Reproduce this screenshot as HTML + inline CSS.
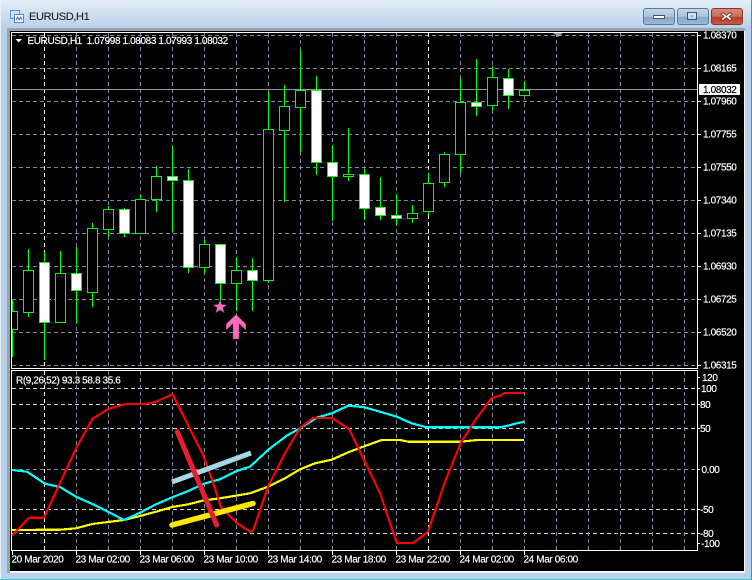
<!DOCTYPE html>
<html><head><meta charset="utf-8"><title>EURUSD,H1</title>
<style>
html,body{margin:0;padding:0;width:752px;height:580px;overflow:hidden;background:#b9d1ea}
svg{display:block;position:absolute;left:0;top:0}
text{font-family:"Liberation Sans",sans-serif;font-size:10px;letter-spacing:-.38px;fill:#fff;stroke:#fff;stroke-width:.18px;white-space:pre}
.c path,.c rect{stroke:#00ff00;stroke-width:1;fill:#000}
.c rect.w{fill:#fff}
.g{stroke:#7b8ca2;stroke-width:1;stroke-dasharray:4 3;fill:none}
.h{stroke:#fff;stroke-width:1;stroke-dasharray:4 3;fill:none}
.l{stroke:#d8d8d8;stroke-width:1;stroke-dasharray:4 3;fill:none}
.s{stroke:#fff;stroke-width:1;fill:none}
.i{fill:none;stroke-width:2.2;stroke-linejoin:round;shape-rendering:crispEdges}
</style></head><body>
<svg width="752" height="580" viewBox="0 0 752 580" xmlns="http://www.w3.org/2000/svg">
<defs>
<linearGradient id="tb" x1="0" y1="0" x2="0" y2="1"><stop offset="0" stop-color="#e4edf6"/><stop offset=".5" stop-color="#cfe0f0"/><stop offset="1" stop-color="#b9d1ea"/></linearGradient>
<linearGradient id="bn" x1="0" y1="0" x2="0" y2="1"><stop offset="0" stop-color="#c6d9ec"/><stop offset=".5" stop-color="#a9c4de"/><stop offset=".55" stop-color="#86a8ca"/><stop offset="1" stop-color="#9dbbd8"/></linearGradient>
<linearGradient id="bc" x1="0" y1="0" x2="0" y2="1"><stop offset="0" stop-color="#dc8a7c"/><stop offset=".5" stop-color="#cf6a58"/><stop offset=".55" stop-color="#b83a28"/><stop offset="1" stop-color="#c85a46"/></linearGradient>
<clipPath id="mc"><rect x="12" y="33" width="685" height="335"/></clipPath>
</defs>

<!-- window frame -->
<rect width="752" height="580" fill="#b9d1ea"/>
<rect width="752" height="28" fill="url(#tb)"/>
<rect x="0" y="0" width="1" height="580" fill="#e8f0f8"/>
<rect x="0" y="579" width="752" height="1" fill="#2fd0e0"/>
<rect x="751" y="0" width="1" height="580" fill="#6f8296"/>
<rect x="7" y="28" width="738" height="545" fill="#9aa4ae"/>
<rect x="10" y="31" width="735" height="542" fill="#f4f6f8"/>
<rect x="10" y="31" width="734" height="540" fill="#000"/>

<!-- title icon -->
<rect x="10.5" y="10.5" width="9" height="8" fill="#cfe3f8" stroke="#5b8fd0"/>
<rect x="14.5" y="14.5" width="9" height="8" fill="#fff" stroke="#4a86c8"/>
<path d="M16 20l1.500-3 1.500 3 1.500-3 1.500 3" fill="none" stroke="#3a70b8" stroke-width="1"/>
<text x="29" y="20" style="font-size:11px;letter-spacing:-.35px;fill:#1c1c1c;stroke:#1c1c1c;stroke-width:.1px">EURUSD,H1</text>

<!-- window buttons -->
<rect x="643.500" y="8.500" width="31" height="16" rx="2.500" fill="url(#bn)" stroke="#5d7a98"/>
<rect x="677.500" y="8.500" width="31" height="16" rx="2.500" fill="url(#bn)" stroke="#5d7a98"/>
<rect x="711.500" y="8.500" width="31" height="16" rx="2.500" fill="url(#bc)" stroke="#7a3a30"/>
<rect x="653.500" y="15.500" width="11" height="3" fill="#fff" stroke="#44586c"/>
<rect x="687.500" y="12.500" width="9" height="7" fill="none" stroke="#44586c" stroke-width="1"/>
<rect x="689" y="14" width="6" height="4" fill="none" stroke="#fff" stroke-width="1"/>
<path d="M723 12.500l3.500 3 3.500-3 2 1.500-3 2.500 3 2.500-2 1.500-3.500-3-3.500 3-2-1.500 3-2.500-3-2.500z" fill="#fff" stroke="#5a3a34" stroke-width=".8"/>

<!-- main grid -->
<g>
<path class="g" d="M12 35.500H697M12 68.500H697M12 101.500H697M12 134.500H697M12 167.500H697M12 200.500H697M12 233.500H697M12 266.500H697M12 299.500H697M12 332.500H697M12 365.500H697"/>
<path class="g" d="M76.500 33V368M108.500 33V368M140.500 33V368M172.500 33V368M204.500 33V368M236.500 33V368M268.500 33V368M300.500 33V368M332.500 33V368M364.500 33V368M396.500 33V368M460.500 33V368M492.500 33V368M524.500 33V368M556.500 33V368M588.500 33V368M620.500 33V368M652.500 33V368M684.500 33V368"/>
<path class="h" d="M44.500 33V368M428.500 33V368"/>
<path d="M12 89.500H697" stroke="#8a96a4" stroke-width="1"/>

<!-- candles -->
<g class="c" clip-path="url(#mc)">
<path d="M12.500 300V357"/><rect x="7.500" y="311.500" width="10" height="18"/>
<path d="M28.500 249V317"/><rect x="23.500" y="270.500" width="10" height="42"/>
<path d="M44.500 252V360"/><rect class="w" x="39.500" y="262.500" width="10" height="60"/>
<path d="M60.500 251V273"/><rect x="55.500" y="273.500" width="10" height="49"/>
<path d="M76.500 247V324"/><rect class="w" x="71.500" y="273.500" width="10" height="17"/>
<path d="M92.500 223V307"/><rect x="87.500" y="228.500" width="10" height="64"/>
<path d="M108.500 206V237"/><rect x="103.500" y="209.500" width="10" height="20"/>
<path d="M124.500 208V237"/><rect class="w" x="119.500" y="209.500" width="10" height="24"/>
<path d="M140.500 195V199"/><rect x="135.500" y="199.500" width="10" height="34"/>
<path d="M156.500 166V212"/><rect x="151.500" y="176.500" width="10" height="23"/>
<path d="M172.500 146V232"/><rect class="w" x="167.500" y="176.500" width="10" height="4"/>
<path d="M188.500 169V273"/><rect class="w" x="183.500" y="180.500" width="10" height="87"/>
<path d="M204.500 240V274"/><rect x="199.500" y="244.500" width="10" height="23"/>
<path d="M220.500 244V304"/><rect class="w" x="215.500" y="244.500" width="10" height="39"/>
<path d="M236.500 257V311"/><rect x="231.500" y="270.500" width="10" height="13"/>
<path d="M252.500 258V311"/><rect class="w" x="247.500" y="270.500" width="10" height="10"/>
<path d="M268.500 92V283"/><rect x="263.500" y="129.500" width="10" height="151"/>
<path d="M284.500 85V202"/><rect x="279.500" y="106.500" width="10" height="24"/>
<path d="M300.500 50V153"/><rect x="295.500" y="90.500" width="10" height="17"/>
<path d="M316.500 76V175"/><rect class="w" x="311.500" y="90.500" width="10" height="72"/>
<path d="M332.500 145V221"/><rect class="w" x="327.500" y="162.500" width="10" height="14"/>
<path d="M348.500 128V181"/><rect x="343.500" y="174.500" width="10" height="2"/>
<path d="M364.500 169V220"/><rect class="w" x="359.500" y="174.500" width="10" height="34"/>
<path d="M380.500 177V220"/><rect class="w" x="375.500" y="207.500" width="10" height="8"/>
<path d="M396.500 194V226"/><rect class="w" x="391.500" y="215.500" width="10" height="3"/>
<path d="M412.500 205V223"/><rect x="407.500" y="213.500" width="10" height="5"/>
<path d="M428.500 173V215"/><rect x="423.500" y="183.500" width="10" height="28"/>
<path d="M444.500 152V187"/><rect x="439.500" y="154.500" width="10" height="28"/>
<path d="M460.500 78V173"/><rect x="455.500" y="102.500" width="10" height="52"/>
<path d="M476.500 59V116"/><rect class="w" x="471.500" y="102.500" width="10" height="4"/>
<path d="M492.500 66V111"/><rect x="487.500" y="77.500" width="10" height="28"/>
<path d="M508.500 69V109"/><rect class="w" x="503.500" y="78.500" width="10" height="17"/>
<path d="M524.500 81V97"/><rect x="519.500" y="90.500" width="10" height="5"/>
</g>

<!-- sub window grid -->
<path class="l" d="M12 388.500H697M12 404.500H697M12 428.500H697M12 509.500H697M12 533.500H697"/>
<path class="g" d="M12 469.500H697"/>
<path class="g" d="M76.500 371V550M108.500 371V550M140.500 371V550M172.500 371V550M204.500 371V550M236.500 371V550M268.500 371V550M300.500 371V550M332.500 371V550M364.500 371V550M396.500 371V550M460.500 371V550M492.500 371V550M524.500 371V550M556.500 371V550M588.500 371V550M620.500 371V550M652.500 371V550M684.500 371V550"/>
<path class="h" d="M44.500 371V550M428.500 371V550"/>

<!-- frames -->
<path class="s" d="M11.500 32.500H697.500V368.500H11.500ZM11.500 370.500H697.500V550.500H11.500Z"/>
<path class="s" d="M698 35.500h3M698 68.500h3M698 101.500h3M698 134.500h3M698 167.500h3M698 200.500h3M698 233.500h3M698 266.500h3M698 299.500h3M698 332.500h3M698 365.500h3M698 377.500h2M698 388.500h2M698 404.500h2M698 428.500h2M698 469.500h2M698 509.500h2M698 533.500h2M698 543.500h2"/>
<path class="s" d="M12.500 551v4M76.500 551v4M140.500 551v4M204.500 551v4M268.500 551v4M332.500 551v4M396.500 551v4M460.500 551v4M524.500 551v4"/>
</g>
<polygon points="553,33 563,33 558,37" fill="#9a9a9a"/>

<!-- star and arrow -->
<polygon points="220,300 221.700,304.500 226.700,304.800 222.800,307.800 224.200,312.700 220,310 215.800,312.700 217.200,307.800 213.300,304.800 218.300,304.500" fill="#ff69b4" stroke="#5a4a9a" stroke-width=".5"/>
<polygon points="236,314.500 245.800,324 245.800,330 239,323.500 239,339 233,339 233,323.500 226.200,330 226.200,324" fill="#ff69b4" stroke="#7a4a9a" stroke-width=".5"/>

<!-- indicator lines -->
<polyline class="i" stroke="#ffff00" points="12,530 60,529.700 76,528.300 92.300,524 124,520 140,516 156,511.700 172.300,507 188.300,504.300 204,500.300 220,498.300 250,493.300 268,486.700 285,478.300 300,469.300 315,463.300 331.700,459.700 348.300,452.300 365,446 381.700,440 400,440 408.300,441.700 460,441.700 478,440 524,440"/>
<polyline class="i" stroke="#00ffff" points="12,470 27,471.700 45,483.700 60,487 76,496.700 92.300,504 108,511.700 124,520 140,512.700 156,504.300 172.300,497.300 188.300,491 204,483.700 220,479.300 236.700,471 250,466.700 268,450 286.700,435.700 300,428.300 316.700,417.700 331.700,413.300 348.300,405.700 363.300,407 380,411.700 396.700,416.700 411.700,423.300 426.700,427.300 500,427.300 508,425.700 516.700,423.300 524.300,421.700"/>
<polyline class="i" stroke="#ff0000" points="12,535.700 29,517.700 44,517.700 60,483 76.300,448 92.300,419 108,409 126,404 146,404 156,401.700 172.700,394.300 188,425 203,455 213,482 220.700,506.700 236.700,523 250,531.700 253,531 268,486.700 285,453 300,428 313,418 332,418 349,429 365,462 380,493 396.700,543 413,543 428,531.700 445,481.700 460.700,443 476.700,418 491.700,398 500,395.700 505,393 524,393"/>

<!-- trend lines -->
<line x1="172" y1="482" x2="251" y2="453" stroke="#a4d8e6" stroke-width="5"/>
<line x1="172" y1="525" x2="253" y2="503.500" stroke="#ffe800" stroke-width="5.500" stroke-linecap="round"/>
<line x1="177.300" y1="431.700" x2="216.700" y2="525" stroke="#e8202e" stroke-width="5" stroke-linecap="round"/>

<!-- chart labels -->
<polygon points="15.500,39 22,39 18.700,42.500" fill="#fff"/>
<text x="27.500" y="44">EURUSD,H1  1.07998 1.08083 1.07993 1.08032</text>
<text x="16" y="383.500">R(9,26,52) 93.3 58.8 35.6</text>

<!-- price axis -->
<text x="703" y="38.500">1.08370</text>
<text x="703" y="71.500">1.08165</text>
<rect x="699" y="84" width="41" height="11" fill="#fff"/>
<text x="703" y="93" style="fill:#000;stroke:#000">1.08032</text>
<text x="703" y="104.500">1.07960</text>
<text x="703" y="137.500">1.07755</text>
<text x="703" y="170.500">1.07550</text>
<text x="703" y="203.500">1.07340</text>
<text x="703" y="236.500">1.07135</text>
<text x="703" y="269.500">1.06930</text>
<text x="703" y="302.500">1.06725</text>
<text x="703" y="335.500">1.06520</text>
<text x="703" y="368.500">1.06315</text>

<text x="702" y="381">120</text>
<text x="701" y="392">100</text>
<text x="700" y="408">80</text>
<text x="700" y="432">50</text>
<text x="701.500" y="473">0.00</text>
<text x="700" y="513">-50</text>
<text x="700" y="537">-80</text>
<text x="701" y="547">-100</text>

<!-- time axis -->
<text x="11.500" y="562.500">20 Mar 2020</text>
<text x="75.500" y="562.500">23 Mar 02:00</text>
<text x="139.500" y="562.500">23 Mar 06:00</text>
<text x="203.500" y="562.500">23 Mar 10:00</text>
<text x="267.500" y="562.500">23 Mar 14:00</text>
<text x="331.500" y="562.500">23 Mar 18:00</text>
<text x="395.500" y="562.500">23 Mar 22:00</text>
<text x="459.500" y="562.500">24 Mar 02:00</text>
<text x="523.500" y="562.500">24 Mar 06:00</text>
</svg>
</body></html>
